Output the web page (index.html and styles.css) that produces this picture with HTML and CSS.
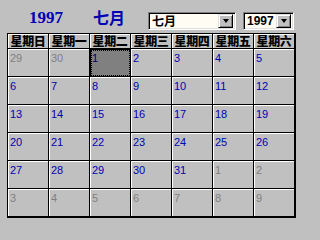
FILE: index.html
```html
<!DOCTYPE html>
<html>
<head>
<meta charset="utf-8">
<link rel="stylesheet" href="styles.css">
</head>
<body>
<div class="top">
  <div class="t-year">1997</div>
  <div class="t-month">七月</div>
  <div class="combo combo-month"><span class="combo-text">七月</span><span class="combo-btn"><span class="arrow"></span></span></div>
  <div class="combo combo-year"><span class="combo-text num">1997</span><span class="combo-btn"><span class="arrow"></span></span></div>
</div>
<div class="cal">
  <div class="dow">星期日</div><div class="dow">星期一</div><div class="dow">星期二</div><div class="dow">星期三</div><div class="dow">星期四</div><div class="dow">星期五</div><div class="dow">星期六</div>
  <div class="day off">29</div><div class="day off">30</div><div class="day sel">1</div><div class="day">2</div><div class="day">3</div><div class="day">4</div><div class="day">5</div>
  <div class="day">6</div><div class="day">7</div><div class="day">8</div><div class="day">9</div><div class="day">10</div><div class="day">11</div><div class="day">12</div>
  <div class="day">13</div><div class="day">14</div><div class="day">15</div><div class="day">16</div><div class="day">17</div><div class="day">18</div><div class="day">19</div>
  <div class="day">20</div><div class="day">21</div><div class="day">22</div><div class="day">23</div><div class="day">24</div><div class="day">25</div><div class="day">26</div>
  <div class="day">27</div><div class="day">28</div><div class="day">29</div><div class="day">30</div><div class="day">31</div><div class="day off">1</div><div class="day off">2</div>
  <div class="day off">3</div><div class="day off">4</div><div class="day off">5</div><div class="day off">6</div><div class="day off">7</div><div class="day off">8</div><div class="day off">9</div>
</div>
</body>
</html>
```

FILE: styles.css
```css
html, body {
  margin: 0;
  padding: 0;
  background: #c0c0c0;
}
body {
  width: 303px;
  height: 228px;
  overflow: hidden;
  font-family: "Liberation Sans", "Noto Sans CJK SC", sans-serif;
}
.top {
  display: flex;
  align-items: flex-start;
  height: 33px;
  padding-left: 29px;
  box-sizing: border-box;
}
.t-year {
  width: 64px;
  margin-top: 9px;
  font-family: "Liberation Serif", serif;
  font-weight: bold;
  font-size: 17px;
  line-height: 18px;
  color: #0000b4;
}
.t-month {
  width: 55px;
  margin-top: 8px;
  font-family: "Noto Sans CJK SC", sans-serif;
  font-weight: bold;
  font-size: 16px;
  line-height: 18px;
  color: #0000b4;
}
.combo {
  margin-top: 12px;
  height: 18px;
  box-sizing: border-box;
  display: flex;
  align-items: stretch;
  background: #fffcf4;
  border-style: solid;
  border-width: 1px;
  border-color: #808080 #fff #fff #808080;
  box-shadow: inset 1px 1px 0 #000, inset -1px -1px 0 #dfdfdf;
  padding: 1px 2px 1px 1px;
}
.combo-month {
  width: 88px;
  margin-right: 7px;
}
.combo-year {
  width: 51px;
}
.combo-text {
  flex: 1;
  padding-left: 2px;
  font-family: "Noto Sans CJK SC", sans-serif;
  font-weight: bold;
  font-size: 12px;
  line-height: 14px;
  color: #000;
}
.combo-text.num {
  font-family: "Liberation Sans", sans-serif;
  font-weight: bold;
  font-size: 12px;
  line-height: 14px;
}
.combo-btn {
  width: 15px;
  box-sizing: border-box;
  background: #c0c0c0;
  border-style: solid;
  border-width: 1px;
  border-color: #dfdfdf #000 #000 #dfdfdf;
  box-shadow: inset 1px 1px 0 #fff, inset -1px -1px 0 #808080;
  display: flex;
  align-items: center;
  justify-content: center;
}
.arrow {
  width: 0;
  height: 0;
  border-left: 3.5px solid transparent;
  border-right: 3.5px solid transparent;
  border-top: 4px solid #000;
}
.cal {
  display: grid;
  grid-template-columns: repeat(7, 41px);
  grid-template-rows: 15px repeat(6, 28px);
  width: max-content;
  margin-left: 7px;
  border: 1px solid #000;
  border-right-width: 1px;
}
.dow, .day {
  box-sizing: border-box;
  border-right: 1px solid #000;
  border-bottom: 1px solid #000;
  box-shadow: inset 1px 1px 0 #fff;
}
.dow {
  font-family: "Noto Sans CJK SC", sans-serif;
  font-weight: 900;
  font-size: 12px;
  line-height: 14px;
  text-align: center;
  color: #000;
  letter-spacing: -0.3px;
}
.day {
  padding: 3px 0 0 2px;
  font-family: "Liberation Sans", sans-serif;
  font-size: 11px;
  line-height: 12px;
  color: #0000b4;
}
.day.off {
  color: #808080;
}
.day.sel {
  position: relative;
  background: #808080;
  box-shadow: inset 1px 1px 0 #000;
  color: #000060;
}
.day.sel::after {
  content: "";
  position: absolute;
  left: 1px;
  top: 1px;
  right: 0;
  bottom: 0;
  border: 1px dotted #000;
}
```
